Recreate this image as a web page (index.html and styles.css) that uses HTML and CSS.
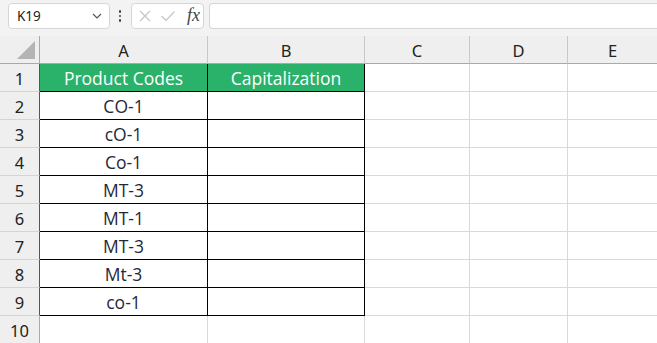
FILE: index.html
```html
<!DOCTYPE html>
<html>
<head>
<meta charset="utf-8">
<link rel="stylesheet" href="styles.css">
</head>
<body>
<div class="toolbar">
  <div class="namebox"><span class="nb-text">K19</span>
    <svg class="chev" width="10" height="6" viewBox="0 0 10 6"><path d="M1 1 L5 5 L9 1" fill="none" stroke="#555" stroke-width="1.2"/></svg>
  </div>
  <div class="dots"><span></span><span></span><span></span></div>
  <div class="fxbox">
    <svg width="14" height="14" viewBox="0 0 14 14"><path d="M2 2 L12 12 M12 2 L2 12" stroke="#c4c4c4" stroke-width="1.2" fill="none"/></svg>
    <svg width="16" height="14" viewBox="0 0 16 14"><path d="M1.5 7 L6 11.5 L14.5 2.5" stroke="#c4c4c4" stroke-width="1.2" fill="none"/></svg>
    <span class="fx">fx</span>
  </div>
  <div class="formula"></div>
</div>
<div class="grid">
  <div class="corner"><svg width="20" height="20" viewBox="0 0 20 20"><path d="M19 1 L19 19 L1 19 Z" fill="#b4b4b4"/></svg></div>
  <div class="ch">A</div><div class="ch">B</div><div class="ch">C</div><div class="ch">D</div><div class="ch e">E</div>

  <div class="rh dk">1</div><div class="c hd a">Product Codes</div><div class="c hd b">Capitalization</div><div class="c"></div><div class="c"></div><div class="c e"></div>
  <div class="rh dk">2</div><div class="c d a">CO-1</div><div class="c d b"></div><div class="c"></div><div class="c"></div><div class="c e"></div>
  <div class="rh dk">3</div><div class="c d a">cO-1</div><div class="c d b"></div><div class="c"></div><div class="c"></div><div class="c e"></div>
  <div class="rh dk">4</div><div class="c d a">Co-1</div><div class="c d b"></div><div class="c"></div><div class="c"></div><div class="c e"></div>
  <div class="rh dk">5</div><div class="c d a">MT-3</div><div class="c d b"></div><div class="c"></div><div class="c"></div><div class="c e"></div>
  <div class="rh dk">6</div><div class="c d a">MT-1</div><div class="c d b"></div><div class="c"></div><div class="c"></div><div class="c e"></div>
  <div class="rh dk">7</div><div class="c d a">MT-3</div><div class="c d b"></div><div class="c"></div><div class="c"></div><div class="c e"></div>
  <div class="rh dk">8</div><div class="c d a">Mt-3</div><div class="c d b"></div><div class="c"></div><div class="c"></div><div class="c e"></div>
  <div class="rh dk">9</div><div class="c d a">co-1</div><div class="c d b"></div><div class="c"></div><div class="c"></div><div class="c e"></div>
  <div class="rh">10</div><div class="c"></div><div class="c"></div><div class="c"></div><div class="c"></div><div class="c e"></div>
</div>
</body>
</html>
```
FILE: styles.css
```css
* { box-sizing: border-box; }
html, body { margin: 0; padding: 0; }
body {
  width: 657px;
  height: 343px;
  overflow: hidden;
  background: #fff;
  font-family: "Open Sans", "Noto Sans", sans-serif;
  color: #222;
}
.toolbar {
  height: 36px;
  background: #f3f3f3;
  display: flex;
  align-items: flex-start;
  padding: 3px 0 0 8px;
}
.namebox {
  width: 102px;
  height: 26px;
  background: #fff;
  border: 1px solid #d6d6d6;
  border-radius: 4px;
  display: flex;
  align-items: center;
  justify-content: space-between;
  padding: 0 7px 0 8px;
}
.nb-text { font-size: 13.5px; color: #222; font-family: "Noto Sans", sans-serif; }
.dots {
  width: 20px;
  height: 26px;
  display: flex;
  flex-direction: column;
  align-items: center;
  justify-content: center;
  gap: 2px;
}
.dots span { width: 2.5px; height: 2.5px; background: #444; border-radius: 50%; }
.fxbox {
  width: 73px;
  height: 26px;
  background: #fff;
  border: 1px solid #d6d6d6;
  border-radius: 4px;
  display: flex;
  align-items: center;
  gap: 8px;
  padding: 0 0 0 6px;
  margin-left: 1px;
}
.fx {
  font-family: "Liberation Serif", "DejaVu Serif", serif;
  font-style: italic;
  font-size: 18px;
  color: #444;
  margin-left: 3px;
  margin-top: -2px;
}
.formula {
  flex: 1;
  height: 26px;
  margin-left: 5px;
  background: #fff;
  border: 1px solid #d6d6d6;
  border-right: none;
  border-radius: 4px 0 0 4px;
}
.grid {
  display: grid;
  grid-template-columns: 40px 168px 157px 105px 98px 1fr;
  grid-auto-rows: 28px;
}
.grid > div {
  border-right: 1px solid #d9d9d9;
  border-bottom: 1px solid #d9d9d9;
  display: flex;
  align-items: center;
  justify-content: center;
}
.corner {
  background: #efefef;
  border-right-color: #a9a9a9 !important;
  border-bottom-color: #a9a9a9 !important;
  justify-content: flex-end !important;
  align-items: flex-end !important;
  padding: 0 3px 3px 0;
}
.ch {
  background: #efefef;
  border-bottom-color: #a9a9a9 !important;
  border-right-color: #c8c8c8 !important;
  font-family: "Noto Sans", sans-serif;
  font-size: 16.5px;
  padding-top: 1px;
}
.rh {
  background: #efefef;
  border-right-color: #a9a9a9 !important;
  border-bottom-color: #d4d4d4 !important;
  font-family: "Noto Sans", sans-serif;
  font-size: 16.5px;
  padding-top: 1px;
}
.rh.dk { border-right-color: #555 !important; }
.c { font-size: 17.5px; }
.hd { background: #2ab16a; color: #fff; border-right-color: #000 !important; border-bottom-color: #000 !important; }
.d { border-right-color: #000 !important; border-bottom-color: #000 !important; color: #1f2a3a; }
.e { border-right: none !important; }
```
